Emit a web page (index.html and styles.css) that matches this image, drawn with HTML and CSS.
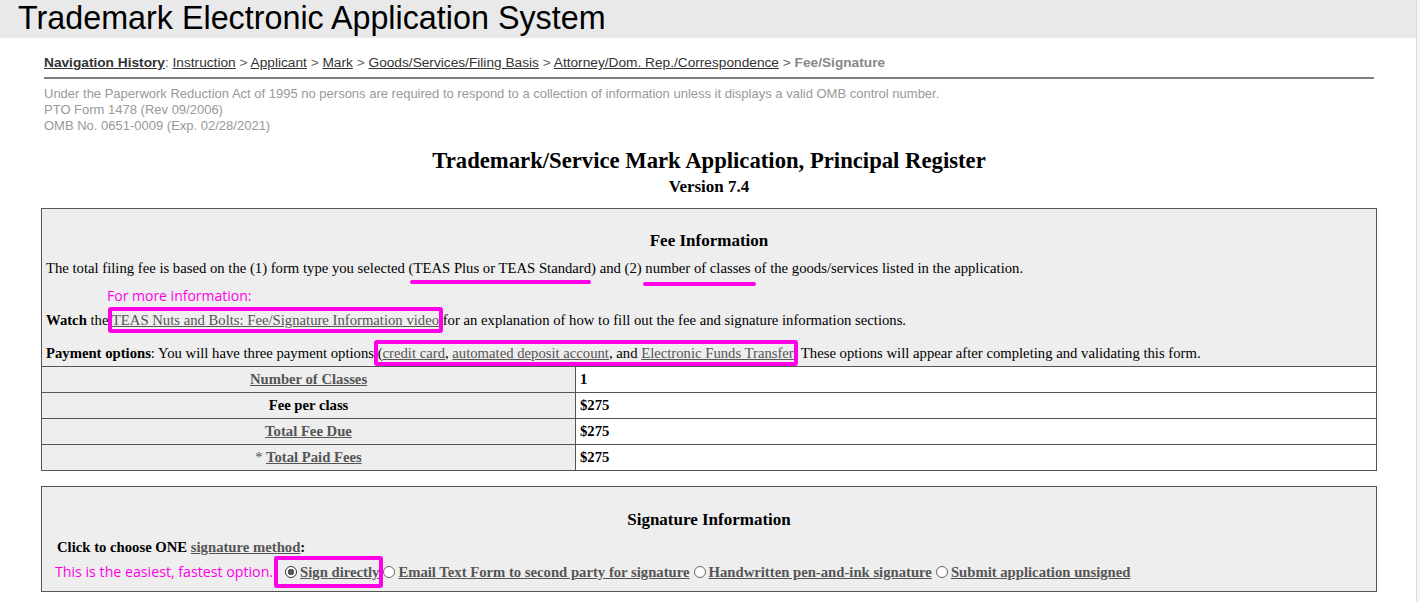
FILE: index.html
```html
<!DOCTYPE html>
<html>
<head>
<meta charset="utf-8">
<title>TEAS</title>
<link rel="stylesheet" href="styles.css">
</head>
<body>
<div class="page">
  <header class="topbar"><h1 class="app-title">Trademark Electronic Application System</h1></header>
  <main class="content">
    <nav class="nav-history">
      <a class="nav-label">Navigation History</a>: <a>Instruction</a> &gt; <a>Applicant</a> &gt; <a>Mark</a> &gt; <a>Goods/Services/Filing Basis</a> &gt; <a>Attorney/Dom. Rep./Correspondence</a> &gt; <span class="nav-current">Fee/Signature</span>
    </nav>
    <div class="omb">
      <div>Under the Paperwork Reduction Act of 1995 no persons are required to respond to a collection of information unless it displays a valid OMB control number.</div>
      <div>PTO Form 1478 (Rev 09/2006)</div>
      <div>OMB No. 0651-0009 (Exp. 02/28/2021)</div>
    </div>
    <h2 class="form-title">Trademark/Service Mark Application, Principal Register</h2>
    <div class="form-version">Version 7.4</div>

    <section class="panel fee-panel">
      <h3 class="panel-title">Fee Information</h3>
      <p class="para">The total filing fee is based on the (1) form type you selected <span class="mark-line mark-a">(TEAS Plus or TEAS Standard)</span> and (2) <span class="mark-line mark-b">number of classes</span> of the goods/services listed in the application.</p>
      <div class="annot-label">For more information:</div>
      <p class="para para-watch"><b>Watch</b> the <span class="mark-box"><a>TEAS Nuts and Bolts: Fee/Signature Information video</a></span> for an explanation of how to fill out the fee and signature information sections.</p>
      <p class="para para-pay"><b>Payment options</b>: You will have three payment options <span class="mark-box">(<a>credit card</a>, <a>automated deposit account</a>, and <a>Electronic Funds Transfer</a></span>. These options will appear after completing and validating this form.</p>
      <table class="fee-table">
        <tr><th><a>Number of Classes</a></th><td>1</td></tr>
        <tr><th>Fee per class</th><td>$275</td></tr>
        <tr><th><a>Total Fee Due</a></th><td>$275</td></tr>
        <tr><th><span class="star">*</span> <a>Total Paid Fees</a></th><td>$275</td></tr>
      </table>
    </section>

    <section class="panel sig-panel">
      <h3 class="panel-title sig-title">Signature Information</h3>
      <div class="sig-choose">Click to choose ONE <a>signature method</a>:</div>
      <div class="sig-options">
        <span class="annot-inline">This is the easiest, fastest option.</span>
        <span class="mark-box sig-box"><span class="radio radio-on"></span><a>Sign directly</a></span>
        <span class="radio"></span><a>Email Text Form to second party for signature</a>
        <span class="radio"></span><a>Handwritten pen-and-ink signature</a>
        <span class="radio"></span><a>Submit application unsigned</a>
      </div>
    </section>
  </main>
</div>
</body>
</html>
```

FILE: styles.css
```css
html, body {
  margin: 0;
  padding: 0;
  background: #f5f5f5;
}
.page {
  width: 1416px;
  height: 602px;
  overflow: hidden;
  background: #fff;
  border-right: 1px solid #dcdcdc;
}
.topbar {
  background: #e9e9e9;
  height: 38px;
  padding-left: 18px;
}
.app-title {
  margin: 0;
  font-family: "Liberation Sans", Arial, sans-serif;
  font-weight: normal;
  font-size: 32.3px;
  line-height: 36px;
  color: #000;
}
.content {
  margin-left: 41px;
  width: 1336px;
}
.nav-history {
  margin: 0 3px;
  padding: 17px 0 6px;
  border-bottom: 2px solid #808080;
  font-family: "Liberation Sans", Arial, sans-serif;
  font-size: 13.7px;
  line-height: 16px;
  color: #666;
}
.nav-history a {
  color: #333;
  text-decoration: underline;
}
.nav-history .nav-label {
  font-weight: bold;
}
.nav-current {
  font-weight: bold;
  color: #888;
}
.omb {
  margin: 7px 3px 0;
  font-family: "Liberation Sans", Arial, sans-serif;
  font-size: 13px;
  line-height: 16px;
  color: #999;
}
.form-title {
  margin: 14px 0 0;
  text-align: center;
  font-family: "Liberation Serif", "Times New Roman", serif;
  font-size: 22.7px;
  line-height: 26px;
  font-weight: bold;
  color: #000;
}
.form-version {
  text-align: center;
  font-family: "Liberation Serif", "Times New Roman", serif;
  font-size: 17px;
  line-height: 26px;
  font-weight: bold;
}
.panel {
  margin-top: 8px;
  border: 1px solid #555;
  background: #eee;
  font-family: "Liberation Serif", "Times New Roman", serif;
  color: #000;
}
.panel a {
  color: #555;
  text-decoration: underline;
}
.panel-title {
  margin: 0;
  padding-top: 22px;
  text-align: center;
  font-size: 17px;
  line-height: 20px;
  font-weight: bold;
}
.para {
  margin: 0;
  padding: 0 4px;
  font-size: 14.7px;
  line-height: 18px;
}
.fee-panel .panel-title + .para {
  margin-top: 8px;
}
.annot-label {
  margin: 10px 0 0 65px;
  font-family: "Open Sans", "Noto Sans", sans-serif;
  font-size: 14px;
  line-height: 18px;
  color: #ff00e6;
}
.para-watch {
  margin-top: 6px;
}
.para-pay {
  margin-top: 15px;
}
.mark-line {
  position: relative;
}
.mark-line::after {
  content: "";
  position: absolute;
  left: 1px;
  right: 1px;
  bottom: -8px;
  height: 4px;
  border-radius: 2px;
  background: #ff00e6;
}
.mark-a::after {
  right: 5px;
}
.mark-b::after {
  left: -2px;
  right: -5px;
  bottom: -10px;
}
.mark-box {
  position: relative;
}
.mark-box::after {
  content: "";
  position: absolute;
  left: -4px;
  right: -4px;
  top: -5px;
  bottom: -5px;
  border: 4px solid #ff00e6;
  border-radius: 3px;
  pointer-events: none;
}
.fee-table {
  width: 100%;
  margin-top: 4px;
  border-collapse: collapse;
  font-size: 14.7px;
}
.fee-table th, .fee-table td {
  border-top: 1px solid #555;
  height: 25px;
  padding: 0 4px;
}
.fee-table th {
  width: 525px;
  text-align: center;
  font-weight: bold;
  border-right: 1px solid #555;
}
.fee-table .star {
  font-weight: normal;
  color: #555;
}
.fee-table td {
  background: #fff;
  text-align: left;
  font-weight: bold;
}
.sig-panel {
  margin-top: 15px;
  padding-bottom: 8px;
}
.sig-title {
  padding-top: 23px;
}
.sig-choose {
  margin: 8px 0 0 15px;
  font-size: 14.7px;
  line-height: 18px;
  font-weight: bold;
}
.sig-options {
  margin: 5px 0 0 13px;
  font-size: 14.7px;
  line-height: 22px;
  font-weight: bold;
  display: flex;
  align-items: center;
  white-space: nowrap;
}
.annot-inline {
  font-family: "Open Sans", "Noto Sans", sans-serif;
  font-weight: normal;
  font-size: 14.2px;
  color: #ff00e6;
  margin-right: 5px;
}
.sig-box {
  display: inline-flex;
  align-items: center;
  padding-left: 3px;
}
.radio {
  display: inline-block;
  width: 12px;
  height: 12px;
  box-sizing: border-box;
  border: 1px solid #666;
  border-radius: 50%;
  background: #fff;
  margin: 0 3px 0 4px;
}
.radio-on {
  border-color: #333;
  background: radial-gradient(circle, #555 0 3px, #fff 3.5px);
}
```
